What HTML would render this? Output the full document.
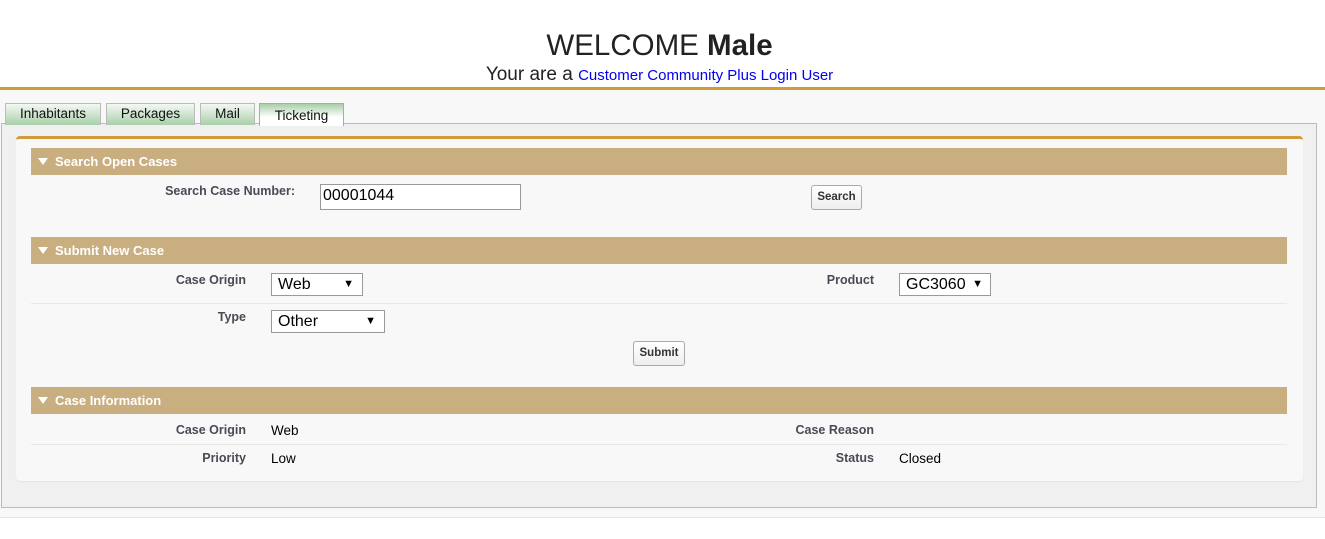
<!DOCTYPE html>
<html><head><style>
body{margin:0;width:1325px;height:539px;background:#fff;font-family:"Liberation Sans",Arial,sans-serif;position:relative;overflow:hidden}
.a{position:absolute}
.lbl{font-size:12.5px;font-weight:bold;color:#4a4a56;text-align:right}
.val{font-size:13.5px;color:#000}
.sec{position:absolute;left:31px;width:1256px;height:27px;background:#c9ae80;color:#fff;font-weight:bold;font-size:13px;line-height:27px}
.sec span{position:absolute;left:24px}
.tri{position:absolute;left:7px;top:10px;width:0;height:0;border-left:5px solid transparent;border-right:5px solid transparent;border-top:7px solid #fff}
.tab{position:absolute;top:103px;height:21px;border:1px solid #bbb;border-bottom:none;background:linear-gradient(#f4f8f4,#a9cfa9);font-size:13.5px;line-height:20px;text-align:center;color:#111}
.sel{position:absolute;height:21px;border:1px solid #999;background:#fff;font-size:16px;line-height:21px;padding-left:6px;box-sizing:border-box}
.sel i{position:absolute;right:8px;top:0;font-style:normal;font-size:11px}
.btn{position:absolute;border:1px solid #aaa;border-radius:3px;background:linear-gradient(#fff,#eee);font-size:11.5px;font-weight:bold;color:#333;text-align:center;line-height:23px;height:23px}
.hr{position:absolute;left:31px;width:1256px;height:1px;background:#e8e8e8}
</style></head><body>
<div class="a" style="left:0;top:29px;width:1319px;text-align:center;font-size:29.5px;color:#222">WELCOME <b>Male</b></div>
<div class="a" style="left:0;top:64px;width:1319px;text-align:center;font-size:19px;color:#222">Your are a <span style="font-size:15px;color:#00e">Customer Community Plus Login User</span></div>
<div class="a" style="left:0;top:87px;width:1325px;height:3px;background:#d09b39"></div>
<div class="a" style="left:0;top:90px;width:1325px;height:427px;background:#f8f8f8;border-bottom:1px solid #e4e4e4"></div>
<div class="a" style="left:1px;top:123px;width:1314px;height:383px;border:1px solid #bbb;background:#f0f0f0"></div>
<div class="tab" style="left:5px;width:94px">Inhabitants</div>
<div class="tab" style="left:106px;width:87px">Packages</div>
<div class="tab" style="left:200px;width:53px">Mail</div>
<div class="tab" style="left:259px;width:83px;height:22px;line-height:24px;background:linear-gradient(#a9cfa9,#fff 60%);border-color:#aaa">Ticketing</div>
<div class="a" style="left:16px;top:136px;width:1287px;height:342px;background:#f8f8f8;border-top:3px solid #d09b39;border-radius:4px;box-shadow:0 1px 1px #e4e4e4"></div>

<div class="sec" style="top:148px"><div class="tri"></div><span>Search Open Cases</span></div>
<div class="a lbl" style="left:100px;width:195px;top:184px">Search Case Number:</div>
<div class="a" style="left:320px;top:184px;border:1px solid #999;background:#fff;font-size:16px;line-height:22px;padding-left:2px;box-sizing:border-box;width:201px;height:26px">00001044</div>
<div class="btn" style="left:811px;top:185px;width:49px">Search</div>

<div class="sec" style="top:237px"><div class="tri"></div><span>Submit New Case</span></div>
<div class="a lbl" style="left:100px;width:146px;top:273px">Case Origin</div>
<div class="sel" style="left:271px;top:273px;width:92px;height:23px">Web<i>▼</i></div>
<div class="a lbl" style="left:700px;width:174px;top:273px">Product</div>
<div class="sel" style="left:899px;top:273px;width:92px;height:23px">GC3060<i style="right:7px">▼</i></div>
<div class="hr" style="top:303px"></div>
<div class="a lbl" style="left:100px;width:146px;top:310px">Type</div>
<div class="sel" style="left:271px;top:310px;width:114px;height:23px">Other<i>▼</i></div>
<div class="btn" style="left:633px;top:341px;width:50px">Submit</div>

<div class="sec" style="top:387px"><div class="tri"></div><span>Case Information</span></div>
<div class="a lbl" style="left:100px;width:146px;top:423px">Case Origin</div>
<div class="a val" style="left:271px;top:423px">Web</div>
<div class="a lbl" style="left:700px;width:174px;top:423px">Case Reason</div>
<div class="hr" style="top:444px"></div>
<div class="a lbl" style="left:100px;width:146px;top:451px">Priority</div>
<div class="a val" style="left:271px;top:451px">Low</div>
<div class="a lbl" style="left:700px;width:174px;top:451px">Status</div>
<div class="a val" style="left:899px;top:451px">Closed</div>
</body></html>
